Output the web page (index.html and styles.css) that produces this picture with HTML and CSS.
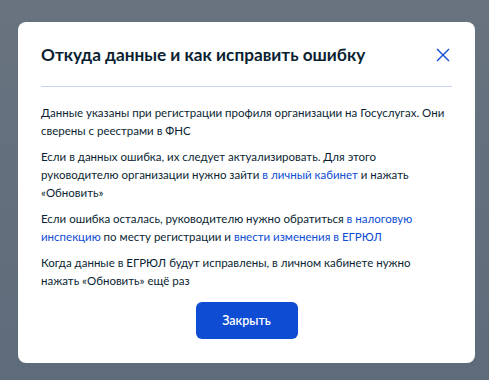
FILE: index.html
```html
<!DOCTYPE html>
<html lang="ru">
<head>
<meta charset="utf-8">
<link rel="stylesheet" href="styles.css">
</head>
<body>
<div class="overlay">
  <div class="modal">
    <div class="modal-header">
      <h2 class="modal-title">Откуда данные и как исправить ошибку</h2>
      <button class="close" aria-label="Закрыть">
        <svg width="14" height="14" viewBox="0 0 14 14"><path d="M1 1L13 13M13 1L1 13" stroke="#0d4cd3" stroke-width="1.4" fill="none"/></svg>
      </button>
    </div>
    <div class="divider"></div>
    <div class="modal-body">
      <p>Данные указаны при регистрации профиля организации на Госуслугах. Они сверены с реестрами в ФНС</p>
      <p>Если в данных ошибка, их следует актуализировать. Для этого руководителю организации нужно зайти <a href="#">в личный кабинет</a> и нажать «Обновить»</p>
      <p>Если ошибка осталась, руководителю нужно обратиться <a href="#">в налоговую инспекцию</a> по месту регистрации и <a href="#">внести изменения в ЕГРЮЛ</a></p>
      <p>Когда данные в ЕГРЮЛ будут исправлены, в личном кабинете нужно нажать «Обновить» ещё раз</p>
    </div>
    <div class="modal-footer">
      <button class="btn-primary">Закрыть</button>
    </div>
  </div>
</div>
</body>
</html>
```
FILE: styles.css
```css
html, body {
  margin: 0;
  padding: 0;
  height: 100%;
}
body {
  font-family: Lato, "Noto Sans", sans-serif;
  background: linear-gradient(180deg, #68737f 0%, #5e6b7a 100%);
  color: #0b1f33;
}
.overlay {
  padding: 22px 14px 0 18px;
}
.modal {
  width: 457px;
  box-sizing: border-box;
  background: #fff;
  border-radius: 8px;
  padding: 19px 23px 24px 23px;
}
.modal-header {
  display: flex;
  align-items: center;
  justify-content: space-between;
  height: 28px;
  margin-bottom: 17px;
}
.modal-title {
  margin: 0;
  font-size: 17.2px;
  font-weight: 700;
  line-height: 24px;
  color: #0b1f33;
}
.close {
  border: 0;
  background: none;
  padding: 0;
  margin-right: 2px;
  width: 14px;
  height: 14px;
  display: flex;
  cursor: pointer;
}
.divider {
  height: 1px;
  background: #c6d3f2;
  margin-bottom: 17px;
}
.modal-body {
  padding-right: 4px;
}
.modal-body p {
  margin: 0 0 8px;
  font-size: 11.5px;
  line-height: 18px;
  color: #0b1f33;
}
.modal-body p:last-child {
  margin-bottom: 0;
}
.modal-body a {
  color: #0d4cd3;
  text-decoration: none;
}
.modal-footer {
  display: flex;
  justify-content: center;
  padding-top: 12px;
}
.btn-primary {
  width: 102px;
  height: 37px;
  border: 0;
  border-radius: 6px;
  background: #0d4cd3;
  color: #fff;
  font-family: Lato, "Noto Sans", sans-serif;
  font-size: 12.5px;
  font-weight: 600;
}
```
